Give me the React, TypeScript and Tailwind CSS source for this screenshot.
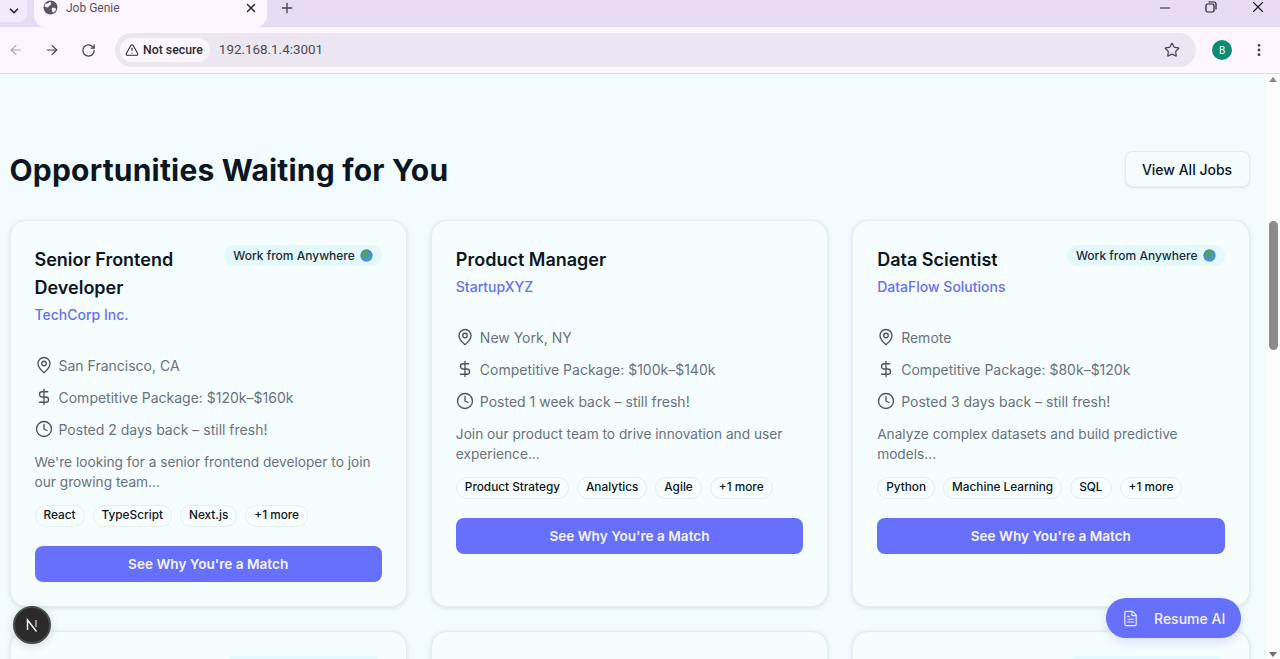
import { ArrowLeft, ArrowRight, ChevronDown, Clock, DollarSign, EllipsisVertical, FileText, MapPin, Minus, Plus, RotateCw, Star, TriangleAlert, X } from 'lucide-react';

interface Job {
    title: string;
    company: string;
    location: string;
    salary: string;
    posted: string;
    description: string;
    tags: string[];
    anywhere: boolean;
}

const jobs: Job[] = [
    {
        title: 'Senior Frontend Developer',
        company: 'TechCorp Inc.',
        location: 'San Francisco, CA',
        salary: 'Competitive Package: $120k–$160k',
        posted: 'Posted 2 days back – still fresh!',
        description: "We're looking for a senior frontend developer to join our growing team...",
        tags: ['React', 'TypeScript', 'Next.js', '+1 more'],
        anywhere: true,
    },
    {
        title: 'Product Manager',
        company: 'StartupXYZ',
        location: 'New York, NY',
        salary: 'Competitive Package: $100k–$140k',
        posted: 'Posted 1 week back – still fresh!',
        description: 'Join our product team to drive innovation and user experience...',
        tags: ['Product Strategy', 'Analytics', 'Agile', '+1 more'],
        anywhere: false,
    },
    {
        title: 'Data Scientist',
        company: 'DataFlow Solutions',
        location: 'Remote',
        salary: 'Competitive Package: $80k–$120k',
        posted: 'Posted 3 days back – still fresh!',
        description: 'Analyze complex datasets and build predictive models...',
        tags: ['Python', 'Machine Learning', 'SQL', '+1 more'],
        anywhere: true,
    },
];

function GlobeEmoji() {
    return (
        <svg width="13" height="13" viewBox="0 0 13 13" className="shrink-0">
            <circle cx="6.5" cy="6.5" r="6.2" fill="#4a90d9" />
            <path d="M3 1.5 C5 .5 8 .6 9.5 2 C10.5 4 8.5 5 7.5 6 C6.5 7.5 7 9 5.5 9.5 C4 8.5 1.5 7 1 5 C1 4 2 2.5 3 1.5 Z" fill="#4f9e6a" />
            <path d="M9.5 7.5 C11 7 12.2 7.5 11.7 9 C10.7 10.5 9 11.2 8.5 10 C8.5 9 8.8 8 9.5 7.5 Z" fill="#5fa878" />
        </svg>
    );
}

function FilledGlobe() {
    return (
        <svg width="15" height="15" viewBox="0 0 15 15" className="shrink-0">
            <circle cx="7.5" cy="7.5" r="7" fill="#5a5760" />
            <path d="M2.5 3.5 C4 4 5.5 3.5 6.5 2 C8 2 8.5 3 8 4.5 C7 5.5 6 5.5 5.5 7 C4.5 8 3 7 1.5 6.5 C1.6 5.5 2 4.5 2.5 3.5 Z" fill="#fdf5ff" />
            <path d="M9 8 C10.5 7.5 12.5 8 13.2 9 C12.8 10.5 11.5 12 10 12.8 C9.5 11.5 8 10 9 8 Z" fill="#fdf5ff" />
        </svg>
    );
}

function AnywhereBadge() {
    return (
        <span className="flex h-[21px] shrink-0 items-center gap-[5px] rounded-full bg-[#e3f9fe] px-[9px] text-[12px] font-medium text-[#1c2a38]">
            Work from Anywhere
            <GlobeEmoji />
        </span>
    );
}

function JobCard({ job }: { job: Job }) {
    return (
        <div className="flex h-[387px] flex-col rounded-2xl border border-[#e4eef2] bg-[#f5fdff] px-6 pt-6 shadow-[0_1px_4px_rgba(120,140,150,0.25)]">
            <div className="flex items-start justify-between gap-4">
                <h3 className="min-w-0 pt-[1px] text-[18px] leading-7 font-semibold text-[#0c1622]">{job.title}</h3>
                {job.anywhere && <AnywhereBadge />}
            </div>
            <div className="-mt-[1px] text-[14px] leading-7 font-medium text-[#6670f0]">{job.company}</div>

            <div className="mt-5 flex flex-col text-[14px] text-[#69727d]">
                <div className="flex h-8 items-center gap-[6px]">
                    <MapPin size={18} strokeWidth={1.8} className="text-[#4b5560]" />
                    {job.location}
                </div>
                <div className="flex h-8 items-center gap-[6px]">
                    <DollarSign size={18} strokeWidth={1.8} className="text-[#4b5560]" />
                    {job.salary}
                </div>
                <div className="flex h-8 items-center gap-[6px]">
                    <Clock size={18} strokeWidth={1.8} className="text-[#4b5560]" />
                    {job.posted}
                </div>
            </div>

            <p className="mt-[7px] text-[13.7px] leading-5 text-[#69727d]">{job.description}</p>

            <div className="mt-[13px] flex gap-2">
                {job.tags.map((tag) => (
                    <span key={tag} className="flex h-[22px] items-center rounded-full border border-[#e6eef1] bg-[#f8feff] px-2 text-[11.8px] font-medium text-[#0c1622]">
                        {tag}
                    </span>
                ))}
            </div>

            <button className="mt-[19px] h-9 w-full rounded-lg bg-[#6670fa] text-[13.6px] font-semibold text-[#f3f4ff]">See Why You're a Match</button>
        </div>
    );
}

// next row of cards, only the top edge is in view
function StubCard({ anywhere }: { anywhere: boolean }) {
    return (
        <div className="flex h-[387px] justify-end rounded-2xl border border-[#e4eef2] bg-[#f5fdff] px-6 pt-6 shadow-[0_1px_4px_rgba(120,140,150,0.25)]">
            {anywhere && <div className="h-[21px] w-[157px] rounded-full bg-[#e3f9fe]" />}
        </div>
    );
}

function BrowserChrome() {
    return (
        <div className="shrink-0 text-[#3c3a42]">
            <div className="flex h-[27px] items-start overflow-hidden bg-[#e8dcf5]">
                <div className="flex h-[22px] w-[27px] items-center justify-center rounded-br-lg bg-[#f3eafb]">
                    <ChevronDown size={14} strokeWidth={3} className="text-[#2a2a30]" />
                </div>
                <div className="ml-[7px] flex h-[27px] w-[233px] items-center rounded-br-xl rounded-bl-xl bg-[#fdf5ff] pb-[12px] pl-[9px]">
                    <FilledGlobe />
                    <span className="ml-[8px] font-['Roboto'] text-[12px] text-[#55525c]">Job Genie</span>
                    <X size={14} strokeWidth={2.5} className="ml-auto mr-[9px] text-[#2e2c33]" />
                </div>
                <Plus size={16} strokeWidth={2} className="ml-[12px] text-[#46434c]" />
                <div className="ml-auto flex items-start">
                    <Minus size={16} strokeWidth={1.5} className="mr-[32px] text-[#1e1c22]" />
                    <svg width="12" height="12" viewBox="0 0 12 12" fill="none" stroke="#1e1c22" strokeWidth="1.2" className="mt-[1px] mr-[32px]">
                        <rect x="1" y="3" width="8" height="8" rx="1.5" />
                        <path d="M3.5 1h5.5a2 2 0 0 1 2 2v5.5" />
                    </svg>
                    <X size={18} strokeWidth={1.5} className="-mt-[2px] mr-[13px] text-[#1e1c22]" />
                </div>
            </div>
            <div className="flex h-[47px] items-center border-b border-[#e3dde6] bg-[#fdf5ff]">
                <ArrowLeft size={16} strokeWidth={1.7} className="ml-[8px] text-[#a9a6ae]" />
                <ArrowRight size={16} strokeWidth={1.7} className="ml-[20px] text-[#44414a]" />
                <RotateCw size={15} strokeWidth={2} className="ml-[21px] text-[#44414a]" />
                <div className="ml-[19px] flex h-[34px] w-[1081px] items-center rounded-full bg-[#ece6f0] pl-[5px]">
                    <div className="flex h-6 items-center gap-[4px] rounded-full bg-[#fbf6fd] pr-[7px] pl-[5px] font-['Roboto'] text-[12.3px] font-medium text-[#2a2830]">
                        <TriangleAlert size={14} strokeWidth={1.8} />
                        Not secure
                    </div>
                    <span className="ml-[9px] font-['Roboto'] text-[13.4px] text-[#4d4a53]">192.168.1.4:3001</span>
                    <Star size={16} strokeWidth={1.8} className="ml-auto mr-[16px] text-[#46434c]" />
                </div>
                <div className="ml-[16px] flex h-5 w-5 items-center justify-center rounded-full bg-[#0b8a78] font-['Roboto'] text-[10px] text-white">B</div>
                <EllipsisVertical size={16} strokeWidth={2.2} className="ml-[19px] text-[#44414a]" />
            </div>
        </div>
    );
}

function Scrollbar() {
    return (
        <div className="relative w-[15px] shrink-0 bg-[#fcfcfc]">
            <div className="absolute top-[147px] left-1 h-[129px] w-[9px] rounded-full bg-[#8b8b8b]" />
            <div className="absolute top-[3px] left-1 h-0 w-0 border-x-[4px] border-b-[5px] border-x-transparent border-b-[#8b8b8b]" />
            <div className="absolute bottom-[2px] left-1 h-0 w-0 border-x-[4px] border-t-[5px] border-x-transparent border-t-[#6f6f6f]" />
        </div>
    );
}

function NextBadge() {
    return (
        <svg width="18" height="18" viewBox="0 0 18 18" fill="none">
            <path d="M4.5 14V4L13.5 15.5" stroke="#f2f2f2" strokeWidth="1.5" />
            <path d="M13 4v7" stroke="#bdbdbd" strokeWidth="1.5" />
        </svg>
    );
}

export default function App() {
    return (
        <div className="flex h-[659px] w-[1280px] flex-col overflow-hidden bg-[#f2fcff] font-['Inter',sans-serif]">
            <BrowserChrome />
            <div className="relative flex min-h-0 flex-1">
                <main className="min-w-0 flex-1 overflow-hidden pt-[77px] pr-[15.5px] pl-[9.5px]">
                    <div className="flex h-[69px] items-start justify-between">
                        <h2 className="mt-[1px] text-[30px] leading-9 font-bold tracking-[0.2px] text-[#0c1622]">Opportunities Waiting for You</h2>
                        <button className="h-9 w-[125px] rounded-lg border border-[#e4eef2] bg-[#f5fdff] text-[14px] font-medium text-[#0c1622] shadow-[0_1px_2px_rgba(120,140,150,0.2)]">View All Jobs</button>
                    </div>
                    <div className="grid grid-cols-3 gap-6">
                        {jobs.map((job) => (
                            <JobCard key={job.title} job={job} />
                        ))}
                        <StubCard anywhere />
                        <StubCard anywhere={false} />
                        <StubCard anywhere />
                    </div>
                </main>
                <Scrollbar />

                <div className="absolute bottom-[15px] left-[13px] flex h-[38px] w-[38px] items-center justify-center rounded-full border-2 border-[#4a4a4a] bg-[#2a2a2a] shadow-[0_2px_10px_rgba(0,0,0,0.15)]">
                    <NextBadge />
                </div>
                <button className="absolute right-[39px] bottom-[21px] flex h-10 w-[135px] items-center rounded-full bg-[#6670fa] pl-[16px] text-[14px] font-medium text-[#f3f4ff] shadow-[0_4px_10px_rgba(100,110,200,0.2)]">
                    <FileText size={17} strokeWidth={1.6} />
                    <span className="ml-[15px]">Resume AI</span>
                </button>
            </div>
        </div>
    );
}
